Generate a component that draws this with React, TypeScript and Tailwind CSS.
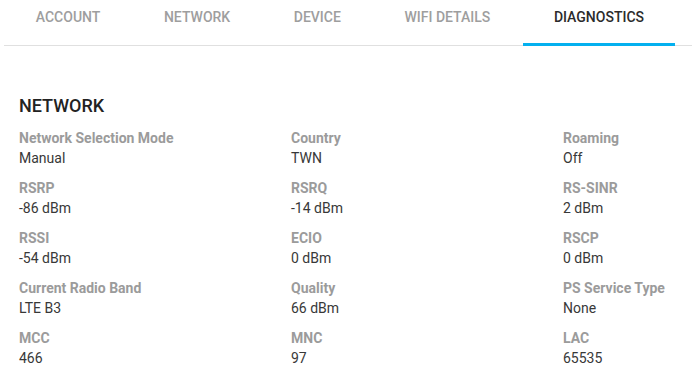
const TABS = ['ACCOUNT', 'NETWORK', 'DEVICE', 'WIFI DETAILS', 'DIAGNOSTICS']

const FIELDS: [string, string][] = [
  ['Network Selection Mode', 'Manual'],
  ['Country', 'TWN'],
  ['Roaming', 'Off'],
  ['RSRP', '-86 dBm'],
  ['RSRQ', '-14 dBm'],
  ['RS-SINR', '2 dBm'],
  ['RSSI', '-54 dBm'],
  ['ECIO', '0 dBm'],
  ['RSCP', '0 dBm'],
  ['Current Radio Band', 'LTE B3'],
  ['Quality', '66 dBm'],
  ['PS Service Type', 'None'],
  ['MCC', '466'],
  ['MNC', '97'],
  ['LAC', '65535'],
]

export default function App() {
  const active = 'DIAGNOSTICS'

  return (
    <div className="w-[692px] h-[373px] overflow-hidden bg-white font-['Roboto',sans-serif]">
      {/* Tabs */}
      <div className="flex h-[46px] ml-1 border-b border-[#e0e0e0]">
        {TABS.map((t) => (
          <div
            key={t}
            className={`relative px-[31.8px] pt-[7px] text-[14px] font-medium leading-[20px] ${
              t === active ? 'text-[#2b2b2b]' : 'text-[#9e9e9e]'
            }`}
          >
            {t}
            {t === active && <span className="absolute left-[1px] right-[1px] bottom-[-1px] h-[3px] bg-[#03b0ef]" />}
          </div>
        ))}
      </div>

      <div className="pl-[19px] pt-[49px]">
        <h2 className="text-[18px] font-medium leading-[22px] text-[#222]">NETWORK</h2>
        <div className="grid grid-cols-[272px_272px_272px] gap-y-[10px] mt-[11px]">
          {FIELDS.map(([label, value]) => (
            <div key={label} className="flex flex-col">
              <span className="text-[14px] font-bold leading-[20px] text-[#9b9b9b] whitespace-nowrap">{label}</span>
              <span className="text-[14px] leading-[20px] text-[#383838]">{value}</span>
            </div>
          ))}
        </div>
      </div>
    </div>
  )
}
